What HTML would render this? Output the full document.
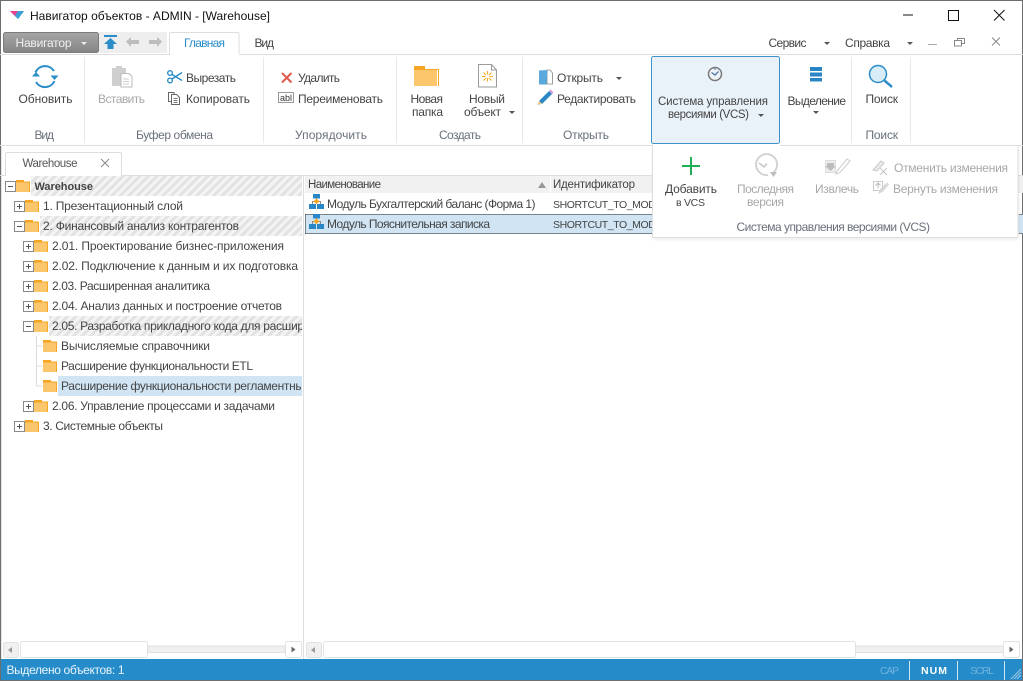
<!DOCTYPE html>
<html><head><meta charset="utf-8"><title>Навигатор объектов</title>
<style>
html,body{margin:0;padding:0;background:#fff;overflow:hidden}
svg{display:block}
text{font-family:"Liberation Sans","DejaVu Sans",sans-serif;font-size:12px;fill:#444;white-space:pre}
.g{fill:#a8a8a8}
.l{fill:#69707a}
.s{font-size:11.5px}
.c{font-size:10.5px}
</style></head><body>
<svg width="1023" height="681" viewBox="0 0 1023 681" xmlns="http://www.w3.org/2000/svg">
<defs>
<linearGradient id="nb" x1="0" y1="0" x2="0" y2="1"><stop offset="0" stop-color="#a5a5a5"/><stop offset="1" stop-color="#858585"/></linearGradient>
<pattern id="h" width="6" height="6" patternUnits="userSpaceOnUse" patternTransform="rotate(-45)"><rect width="6" height="6" fill="#f4f4f4"/><rect width="6" height="3" fill="#e2e2e2"/></pattern>
<g id="f"><path d="M0 0h8v1.500h6v10.500h-14z" fill="#f5a623"/><rect x="0" y="2.500" width="13" height="9.500" fill="#fcc66c"/><rect x="13" y="2" width="1" height="10" fill="#f5a623"/></g>
<g id="pl"><rect x=".5" y=".5" width="10" height="10" fill="#fff" stroke="#8a8a8a"/><path d="M3 5.500h5M5.500 3v5" stroke="#555"/></g>
<g id="mi"><rect x=".5" y=".5" width="10" height="10" fill="#fff" stroke="#8a8a8a"/><path d="M3 5.500h5" stroke="#555"/></g>
<g id="m"><rect x="4" y="0" width="7" height="4.500" fill="#2a87c7"/><rect x="0" y="10" width="7" height="5" fill="#2a87c7"/><rect x="8" y="10" width="7" height="5" fill="#2a87c7"/><path d="M3.500 10V7.500h8V10M7.500 4v3" fill="none" stroke="#8a8a8a"/><path d="M7.500 4.500l3 3-3 2.500-3-2.500z" fill="#f5a623"/></g>
<clipPath id="c1"><rect x="3" y="176" width="299" height="260"/></clipPath>
<clipPath id="c2"><rect x="305" y="176" width="347" height="60"/></clipPath>
</defs>

<!-- window frame -->
<rect width="1023" height="681" fill="#fff"/>
<rect x="0" y="0" width="1023" height="1" fill="#6e6e6e"/>
<rect x="0" y="0" width="1" height="681" fill="#6e6e6e"/>
<rect x="1022" y="0" width="1" height="681" fill="#6e6e6e"/>
<rect x="0" y="680" width="1023" height="1" fill="#6e6e6e"/>

<!-- title -->
<path d="M10 11h14l-6 8z" fill="#2a8dc8"/><path d="M10 11h8l-3 5z" fill="#e8418c"/><path d="M15 16l3-5h6l-6 8z" fill="#3aa0d8"/>
<text x="30" y="20" textLength="240" lengthAdjust="spacing" style="fill:#111">Навигатор объектов - ADMIN - [Warehouse]</text>
<path d="M903 15h10" stroke="#111" stroke-width="1"/>
<rect x="948.500" y="10.500" width="10" height="10" fill="none" stroke="#111"/>
<path d="M994 10l10.500 10.500M1004.500 10L994 20.500" stroke="#111" stroke-width="1"/>

<!-- menu row -->
<rect x="99" y="32" width="68" height="21" fill="#eeeeee"/>
<rect x="3.500" y="32.500" width="95" height="20" rx="2" fill="url(#nb)" stroke="#7c7c7c"/>
<text x="15.500" y="47" textLength="56" lengthAdjust="spacing" style="fill:#f0f0f0">Навигатор</text>
<path d="M81 42h6l-3 3z" fill="#eee"/>
<rect x="104" y="35" width="13" height="2" fill="#2a8dc8"/><path d="M110.500 38l6.500 6h-3.500v5h-6v-5H104z" fill="#2a8dc8"/>
<path d="M126 41.500l5-4.500v3h8v4h-8v3z" fill="#bdbdbd"/>
<path d="M162 41.500l-5-4.500v3h-8v4h8v3z" fill="#bdbdbd"/>

<rect x="0" y="54" width="1023" height="1" fill="#dedede"/>
<path d="M169.500 54.500V34a1.500 1.500 0 0 1 1.500-1.500h67a1.500 1.500 0 0 1 1 1.500v20.500" fill="#fff" stroke="#dedede"/>
<rect x="170" y="53" width="69" height="3" fill="#fff"/>
<text x="184" y="47" textLength="41" lengthAdjust="spacing" style="fill:#2a8dc8">Главная</text>
<text x="254.500" y="47" textLength="19.500" lengthAdjust="spacing">Вид</text>
<text x="768.500" y="47" textLength="38" lengthAdjust="spacing">Сервис</text>
<path d="M824 42h6l-3 3z" fill="#555"/>
<text x="845" y="47" textLength="45" lengthAdjust="spacing">Справка</text>
<path d="M907 42h6l-3 3z" fill="#555"/>
<path d="M928 44.500h9" stroke="#aaa"/>
<rect x="957.500" y="38.500" width="7" height="5" fill="none" stroke="#888"/><rect x="954.500" y="40.500" width="7" height="5.500" fill="#fff" stroke="#888"/>
<path d="M992 37.500l8 8M1000 37.500l-8 8" stroke="#888"/>

<!-- ribbon separators -->
<g fill="#e8e8e8"><rect x="84" y="57" width="1" height="86"/><rect x="263" y="57" width="1" height="86"/><rect x="396" y="57" width="1" height="86"/><rect x="522" y="57" width="1" height="86"/><rect x="851" y="57" width="1" height="86"/><rect x="910" y="57" width="1" height="86"/></g>
<rect x="0" y="145" width="1023" height="1" fill="#dedede"/>

<!-- Обновить -->
<path d="M35.500 72.500A10.500 10.500 0 0 1 54 71" fill="none" stroke="#2a8dc8" stroke-width="2"/>
<path d="M54.500 81A10.500 10.500 0 0 1 36 82" fill="none" stroke="#2a8dc8" stroke-width="2"/>
<path d="M32 76.500h8l-4-4.500zM50.500 75.500h8l-4 4.500z" fill="#2a8dc8"/>
<text x="18.500" y="103" textLength="54" lengthAdjust="spacing">Обновить</text>
<text x="34.500" y="139" textLength="19.500" lengthAdjust="spacing" class="l">Вид</text>

<!-- Буфер -->
<path d="M112 68h4v-2h6v2h4v18h-14z" fill="#cfcfcf"/>
<path d="M121 73.500h8l3 3v10.500h-11z" fill="#fff" stroke="#bbb"/>
<path d="M123 79h6M123 81.500h6M123 84h6" stroke="#ccc"/>
<text x="98" y="103" textLength="47" lengthAdjust="spacing" class="g">Вставить</text>
<circle cx="170" cy="73" r="2.300" fill="none" stroke="#2a8dc8" stroke-width="1.400"/><circle cx="170" cy="80.500" r="2.300" fill="none" stroke="#2a8dc8" stroke-width="1.400"/>
<path d="M172 74.500l10 6M172 79l10-6.500" stroke="#2a8dc8" stroke-width="1.400"/>
<text x="186" y="82" textLength="50" lengthAdjust="spacing">Вырезать</text>
<path d="M168.500 92.500h5.500v9h-5.500z" fill="#fff" stroke="#666"/>
<path d="M171.500 94.500h5l3 3v7h-8z" fill="#fff" stroke="#666"/>
<path d="M173.500 98.500h4M173.500 100.500h4M173.500 102.500h4" stroke="#777"/>
<text x="186" y="103" textLength="64" lengthAdjust="spacing">Копировать</text>
<text x="136" y="139" textLength="77" lengthAdjust="spacing" class="l">Буфер обмена</text>

<!-- Упорядочить -->
<path d="M282 73l9.500 9.500M291.500 73L282 82.500" stroke="#e25a4e" stroke-width="2"/>
<text x="298" y="82" textLength="42" lengthAdjust="spacing">Удалить</text>
<rect x="278.500" y="92.500" width="15" height="10" fill="#fff" stroke="#999"/>
<text x="280" y="101" textLength="12" lengthAdjust="spacing" style="font-size:9px;fill:#333">abl</text>
<text x="298" y="103" textLength="85" lengthAdjust="spacing">Переименовать</text>
<text x="295" y="139" textLength="72" lengthAdjust="spacing" class="l">Упорядочить</text>

<!-- Создать -->
<path d="M414 66h11v3h14v17h-25z" fill="#f5a623"/><rect x="414" y="70" width="23" height="16" fill="#fcc66c"/><rect x="437" y="70" width="1" height="16" fill="#fff"/>
<text x="410.500" y="103" textLength="32.500" lengthAdjust="spacing">Новая</text>
<text x="412" y="116" textLength="31" lengthAdjust="spacing">папка</text>
<path d="M478.500 64.500h13l5 5.500v17h-18z" fill="#fff" stroke="#9a9a9a"/><path d="M491.500 64.500v5.500h5" fill="none" stroke="#9a9a9a"/>
<path d="M487.500 71v3.500M487.500 78v3.500M482 76.500h3.500M489.500 76.500h3.500M483.500 72.500l2.500 2.500M491.500 72.500L489 75M483.500 80.500L486 78M491.500 80.500L489 78" stroke="#f5a623"/>
<text x="469" y="103" textLength="36" lengthAdjust="spacing">Новый</text>
<text x="464" y="116" textLength="37" lengthAdjust="spacing">объект</text>
<path d="M509 111h6l-3 3z" fill="#555"/>
<text x="439" y="139" textLength="42" lengthAdjust="spacing" class="l">Создать</text>

<!-- Открыть -->
<path d="M539 70.500l8-.5v14l-8 .5z" fill="#5aa9dc"/><path d="M547 70h3l2.500 3v11h-5.500z" fill="#fff" stroke="#888" stroke-width=".8"/><path d="M547 70l-1 14h-7" fill="none" stroke="#5aa9dc"/>
<text x="557" y="82" textLength="46" lengthAdjust="spacing">Открыть</text>
<path d="M616 77h6l-3 3z" fill="#555"/>
<path d="M539.500 100.500L549 91l3 3-9.500 9.500-5 1.500z" fill="#2a87c7"/><path d="M549 91l1.500-1.500 3 3L552 94z" fill="#cf9ad6"/><path d="M537.500 105l1.500-4 3 2.500z" fill="#f2c77f"/>
<text x="557" y="103" textLength="79" lengthAdjust="spacing">Редактировать</text>
<text x="563" y="139" textLength="46" lengthAdjust="spacing" class="l">Открыть</text>

<!-- VCS button -->
<rect x="651.500" y="56.500" width="128" height="87" rx="2" fill="#eaf2f9" stroke="#3b93c9"/>
<circle cx="715" cy="74" r="6.500" fill="#eef2f6" stroke="#777" stroke-width="1.500"/>
<path d="M711.500 72.500l3.500 2.500 3.500-3.500" fill="none" stroke="#4a78a8" stroke-width="1.300"/><path d="M715 68v2" stroke="#4a78a8"/>
<text x="658" y="105" textLength="110" lengthAdjust="spacing" class="s">Система управления</text>
<text x="668" y="118" textLength="81" lengthAdjust="spacing" class="s">версиями (VCS)</text>
<path d="M758 114h6l-3 3z" fill="#555"/>
<g fill="#2a87c7"><rect x="810" y="67" width="12" height="4"/><rect x="810" y="72.500" width="12" height="4"/><rect x="810" y="78" width="12" height="3.500"/></g>
<text x="787.500" y="105" textLength="58.500" lengthAdjust="spacing">Выделение</text>
<path d="M813 111h6l-3 3z" fill="#555"/>
<circle cx="878" cy="74" r="8.500" fill="#d8ecf8" stroke="#2a8dc8" stroke-width="1.500"/>
<path d="M884.500 80.500l7.500 6.500" stroke="#2a8dc8" stroke-width="2.500"/>
<text x="865.500" y="103" textLength="32.500" lengthAdjust="spacing">Поиск</text>
<text x="865.500" y="139" textLength="32.500" lengthAdjust="spacing" class="l">Поиск</text>

<!-- doc tab -->
<path d="M0 175.500H5.500V154a1.500 1.500 0 0 1 1.500-1.500h113a1.500 1.500 0 0 1 1.500 1.500v21.500H1023" fill="#fff" stroke="#dedede"/>
<text x="22.500" y="167" textLength="55" lengthAdjust="spacing" class="s" style="fill:#555">Warehouse</text>
<path d="M101 159l8 8M109 159l-8 8" stroke="#888"/>

<rect x="1" y="146" width="1" height="513" fill="#e4e4e4"/>
<rect x="303" y="176" width="1" height="483" fill="#dedede"/>

<!-- tree -->
<rect x="31" y="176" width="271" height="20" fill="url(#h)"/>
<rect x="40" y="216" width="262" height="20" fill="url(#h)"/>
<rect x="49" y="316" width="253" height="20" fill="url(#h)"/>
<rect x="58" y="376" width="244" height="20" fill="#d0e4f3"/>
<g stroke="#dcdcdc" fill="none"><path d="M36.500 336v50h6M36.500 346h6M36.500 366h6"/></g>
<use href="#mi" x="5" y="181"/><use href="#f" x="16" y="180"/>
<use href="#pl" x="14" y="201"/><use href="#f" x="25" y="200"/>
<use href="#mi" x="14" y="221"/><use href="#f" x="25" y="220"/>
<use href="#pl" x="23" y="241"/><use href="#f" x="34" y="240"/>
<use href="#pl" x="23" y="261"/><use href="#f" x="34" y="260"/>
<use href="#pl" x="23" y="281"/><use href="#f" x="34" y="280"/>
<use href="#pl" x="23" y="301"/><use href="#f" x="34" y="300"/>
<use href="#mi" x="23" y="321"/><use href="#f" x="34" y="320"/>
<use href="#f" x="43" y="340"/><use href="#f" x="43" y="360"/><use href="#f" x="43" y="380"/>
<use href="#pl" x="23" y="401"/><use href="#f" x="34" y="400"/>
<use href="#pl" x="14" y="421"/><use href="#f" x="25" y="420"/>
<g clip-path="url(#c1)">
<text x="34.500" y="190" textLength="58.500" lengthAdjust="spacing" style="font-weight:bold;font-size:11px">Warehouse</text>
<text x="43" y="210" textLength="140" lengthAdjust="spacing">1. Презентационный слой</text>
<text x="43" y="230" textLength="196" lengthAdjust="spacing">2. Финансовый анализ контрагентов</text>
<text x="52" y="250" textLength="232" lengthAdjust="spacing">2.01. Проектирование бизнес-приложения</text>
<text x="52" y="270" textLength="246" lengthAdjust="spacing">2.02. Подключение к данным и их подготовка</text>
<text x="52" y="290" textLength="158" lengthAdjust="spacing">2.03. Расширенная аналитика</text>
<text x="52" y="310" textLength="230" lengthAdjust="spacing">2.04. Анализ данных и построение отчетов</text>
<text x="52" y="330" textLength="252" lengthAdjust="spacing">2.05. Разработка прикладного кода для расшир</text>
<text x="61" y="350" textLength="149" lengthAdjust="spacing">Вычисляемые справочники</text>
<text x="61" y="370" textLength="192" lengthAdjust="spacing">Расширение функциональности ETL</text>
<text x="61" y="390" textLength="243" lengthAdjust="spacing">Расширение функциональности регламентны</text>
<text x="52" y="410" textLength="223" lengthAdjust="spacing">2.06. Управление процессами и задачами</text>
<text x="43" y="430" textLength="120" lengthAdjust="spacing">3. Системные объекты</text>
</g>

<!-- list -->
<rect x="305" y="176" width="718" height="17" fill="#f1f1f1"/>
<rect x="550" y="176" width="1" height="17" fill="#fff"/>
<text x="308" y="188" textLength="73" lengthAdjust="spacing" class="s">Наименование</text>
<path d="M538 188l4-6 4 6z" fill="#999"/>
<text x="553" y="188" textLength="82" lengthAdjust="spacing" class="s">Идентификатор</text>
<rect x="305" y="214" width="718" height="20" fill="#d0e4f3"/>
<path d="M305.500 214.500H1023M305.500 233.500H1023M305.500 214.500v19" fill="none" stroke="#222" stroke-dasharray="1 1"/>
<use href="#m" x="309" y="194"/><use href="#m" x="309" y="214"/>
<g clip-path="url(#c2)">
<text x="327" y="208" textLength="208.500" lengthAdjust="spacing">Модуль Бухгалтерский баланс (Форма 1)</text>
<text x="327" y="228" textLength="163" lengthAdjust="spacing">Модуль Пояснительная записка</text>
<text x="553" y="208" textLength="122" lengthAdjust="spacing" class="c">SHORTCUT_TO_MODULE</text>
<text x="553" y="228" textLength="122" lengthAdjust="spacing" class="c">SHORTCUT_TO_MODULE</text>
</g>

<!-- popup -->
<rect x="654" y="148" width="364" height="91" fill="#000" opacity=".10" style="filter:blur(2px)"/>
<rect x="652" y="145" width="366" height="92" fill="#fff"/>
<path d="M652.500 144.500V237M1018 145v92M652 237.500h366" stroke="#dedede" fill="none"/>
<path d="M780 145.500h238" stroke="#dedede"/>
<path d="M682 166h18M691 157v18" stroke="#1fae55" stroke-width="2"/>
<text x="665" y="193" textLength="52" lengthAdjust="spacing">Добавить</text>
<text x="676" y="206" textLength="29" lengthAdjust="spacing" class="c">в VCS</text>
<path d="M773.500 172.500A10.500 10.500 0 1 0 768 175" fill="none" stroke="#cfcfcf" stroke-width="1.800"/>
<path d="M759 163l5 4 3-3.500" fill="none" stroke="#c4c4c4" stroke-width="1.500"/>
<path d="M770 172h7l-3.500 5z" fill="#bfbfbf"/>
<text x="737" y="193" textLength="57" lengthAdjust="spacing" class="g">Последняя</text>
<text x="747" y="206" textLength="37" lengthAdjust="spacing" class="g">версия</text>
<rect x="825.500" y="160.500" width="10" height="12" fill="#eee" stroke="#ddd"/>
<path d="M827 163h7v3h2l-5.500 5-5.500-5h2z" fill="#bdbdbd"/>
<path d="M837 171l10-12 3 2-10 11.500-4 1.500z" fill="#fff" stroke="#ccc"/>
<text x="815" y="193" textLength="44" lengthAdjust="spacing" class="g">Извлечь</text>
<path d="M873 170l8-9 3 2-7 8z" fill="#ececec" stroke="#c8c8c8"/>
<path d="M880 168l7 7M887 168l-7 7" stroke="#c8c8c8" stroke-width="1.200"/>
<text x="894" y="172" textLength="114" lengthAdjust="spacing" class="g">Отменить изменения</text>
<rect x="873.500" y="181.500" width="9" height="9" fill="#fff" stroke="#ccc"/>
<path d="M878 183v5M875.500 185.500l2.500-2.500 2.500 2.500" fill="none" stroke="#bbb"/>
<path d="M878 194l2-5 7-6.500 2 2-6.500 7.500z" fill="#d8d8d8"/>
<text x="893" y="193" textLength="105" lengthAdjust="spacing" class="g">Вернуть изменения</text>
<text x="736.500" y="231" textLength="193.500" lengthAdjust="spacing" class="l">Система управления версиями (VCS)</text>

<!-- scrollbars -->
<g>
<rect x="148" y="646" width="137" height="6.500" fill="#f0f0f0" stroke="#e0e0e0"/>
<rect x="3.500" y="642.500" width="15" height="15" rx="2" fill="#f0f0f0" stroke="#e2e2e2"/>
<path d="M8 650l4-3v6z" fill="#999"/>
<rect x="20.500" y="641.500" width="127" height="16" rx="2" fill="#fff" stroke="#e2e2e2"/>
<rect x="285.500" y="641.500" width="16" height="16" rx="2" fill="#fff" stroke="#e2e2e2"/>
<path d="M295.500 649.500l-4-3v6z" fill="#666"/>
<rect x="855" y="646" width="149" height="6.500" fill="#f0f0f0" stroke="#e0e0e0"/>
<rect x="306.500" y="642.500" width="15" height="15" rx="2" fill="#f0f0f0" stroke="#e2e2e2"/>
<path d="M311 650l4-3v6z" fill="#999"/>
<rect x="323.500" y="641.500" width="532" height="16" rx="2" fill="#fff" stroke="#e2e2e2"/>
<rect x="1003.500" y="641.500" width="16" height="16" rx="2" fill="#fff" stroke="#e2e2e2"/>
<path d="M1013.500 649.500l-4-3v6z" fill="#666"/>
</g>

<!-- status bar -->
<rect x="1" y="659" width="1021" height="21" fill="#268cc9"/>
<text x="6.500" y="674" textLength="118" lengthAdjust="spacing" style="fill:#eaf5fc">Выделено объектов: 1</text>
<text x="880" y="674" textLength="19" lengthAdjust="spacing" class="c" style="fill:#6fb3de">CAP</text>
<text x="921" y="674" textLength="26" lengthAdjust="spacing" class="c" style="fill:#fff;font-weight:bold">NUM</text>
<text x="970" y="674" textLength="24" lengthAdjust="spacing" class="c" style="fill:#6fb3de">SCRL</text>
<g fill="#cfe6f5"><rect x="909" y="661" width="1" height="19"/><rect x="957" y="661" width="1" height="19"/><rect x="1004" y="661" width="1" height="19"/></g>
<path d="M1011 679l10-10M1014 679l7-7M1017 679l4-4" stroke="#9cc9e6"/>
</svg>
</body></html>
